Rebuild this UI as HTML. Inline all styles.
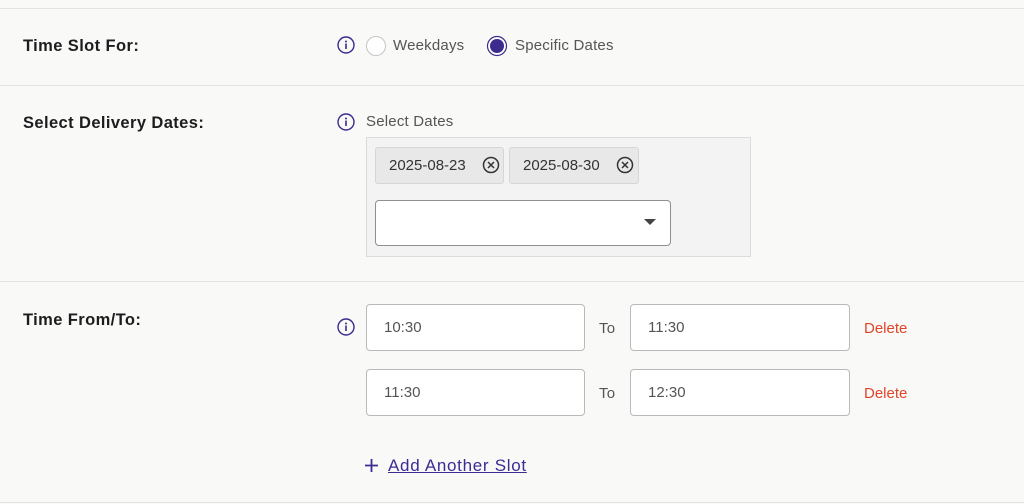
<!DOCTYPE html>
<html><head><style>
body{margin:0;width:1024px;height:504px;background:#f9f9f8;font-family:"Liberation Sans",sans-serif;position:relative;overflow:hidden}
.a{position:absolute}
.hr{position:absolute;left:0;width:1024px;height:1px;background:#e4e4e2}
.lbl{position:absolute;left:23px;font-weight:bold;font-size:16.5px;letter-spacing:0.4px;color:#1d1d1f}
.t{font-size:15px;color:#555;letter-spacing:0.2px}
.inp{position:absolute;background:#fff;border:1px solid #b9b9b9;border-radius:4px;box-sizing:border-box;font-size:15px;color:#555;padding-left:17px;line-height:45px}
.chip{position:absolute;background:#e8e8e8;border:1px solid #d6d6d6;border-radius:3px;box-sizing:border-box;height:37px;font-size:15px;color:#333;padding-left:13px;line-height:35px}
.del{position:absolute;left:864px;font-size:15px;color:#e0452a}
</style></head><body>
<div class="hr" style="top:8px"></div>
<div class="hr" style="top:85px"></div>
<div class="hr" style="top:281px"></div>
<div class="hr" style="top:502px"></div>

<div class="lbl" style="top:37px">Time Slot For:</div>
<div class="lbl" style="top:114px">Select Delivery Dates:</div>
<div class="lbl" style="top:311px">Time From/To:</div>

<svg class="a" style="left:337px;top:36px" width="18" height="18"><circle cx="9" cy="9" r="8" fill="none" stroke="#3c2a8c" stroke-width="1.4"/><circle cx="9" cy="5.5" r="1" fill="#3c2a8c"/><rect x="8.2" y="7.5" width="1.6" height="5.5" fill="#3c2a8c"/></svg>
<svg class="a" style="left:337px;top:113px" width="18" height="18"><circle cx="9" cy="9" r="8" fill="none" stroke="#3c2a8c" stroke-width="1.4"/><circle cx="9" cy="5.5" r="1" fill="#3c2a8c"/><rect x="8.2" y="7.5" width="1.6" height="5.5" fill="#3c2a8c"/></svg>
<svg class="a" style="left:337px;top:318px" width="18" height="18"><circle cx="9" cy="9" r="8" fill="none" stroke="#3c2a8c" stroke-width="1.4"/><circle cx="9" cy="5.5" r="1" fill="#3c2a8c"/><rect x="8.2" y="7.5" width="1.6" height="5.5" fill="#3c2a8c"/></svg>

<svg class="a" style="left:365px;top:35px" width="22" height="22"><circle cx="11" cy="11" r="9.5" fill="#fff" stroke="#c4c4c4" stroke-width="1"/></svg>
<div class="a t" style="left:393px;top:37px">Weekdays</div>
<svg class="a" style="left:486px;top:35px" width="22" height="22"><circle cx="11" cy="11" r="9.5" fill="#fff" stroke="#3c2a8c" stroke-width="1.2"/><circle cx="11" cy="11" r="7" fill="#3c2a8c"/></svg>
<div class="a t" style="left:515px;top:37px">Specific Dates</div>

<div class="a t" style="left:366px;top:113px">Select Dates</div>
<div class="a" style="left:366px;top:137px;width:385px;height:120px;background:#f3f3f3;border:1px solid #dcdcdc;box-sizing:border-box"></div>
<div class="chip" style="left:375px;top:147px;width:129px">2025-08-23</div>
<div class="chip" style="left:509px;top:147px;width:130px">2025-08-30</div>
<svg class="a" style="left:482px;top:156px" width="18" height="18"><circle cx="9" cy="9" r="7.5" fill="none" stroke="#333" stroke-width="1.5"/><path d="M6 6L12 12M12 6L6 12" stroke="#333" stroke-width="1.5"/></svg>
<svg class="a" style="left:616px;top:156px" width="18" height="18"><circle cx="9" cy="9" r="7.5" fill="none" stroke="#333" stroke-width="1.5"/><path d="M6 6L12 12M12 6L6 12" stroke="#333" stroke-width="1.5"/></svg>
<div class="inp" style="left:375px;top:200px;width:296px;height:46px;border-color:#8f8f8f"></div>
<svg class="a" style="left:643px;top:218px" width="14" height="8"><path d="M1 1L13 1L7 7Z" fill="#444"/></svg>

<div class="inp" style="left:366px;top:304px;width:219px;height:47px">10:30</div>
<div class="a t" style="left:599px;top:320px">To</div>
<div class="inp" style="left:630px;top:304px;width:220px;height:47px">11:30</div>
<div class="del" style="top:320px">Delete</div>
<div class="inp" style="left:366px;top:369px;width:219px;height:47px">11:30</div>
<div class="a t" style="left:599px;top:385px">To</div>
<div class="inp" style="left:630px;top:369px;width:220px;height:47px">12:30</div>
<div class="del" style="top:385px">Delete</div>

<svg class="a" style="left:364px;top:458px" width="16" height="16"><path d="M7.5 1V14M1 7.5H14" stroke="#3d2b94" stroke-width="1.8"/></svg>
<div class="a" style="left:388px;top:456px;font-size:17px;letter-spacing:0.7px;color:#3d2b94;text-decoration:underline">Add Another Slot</div>
</body></html>
